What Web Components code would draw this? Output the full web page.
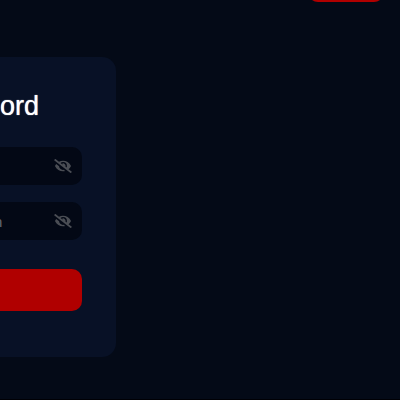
<!DOCTYPE html>
<html lang="en">
<head>
<meta charset="utf-8">
<title>Password</title>
<style>
html, body { margin: 0; height: 100%; background: #040a17; }
body { font-family: "Liberation Sans", Arial, sans-serif; color: #fff; overflow: hidden; }
</style>
</head>
<body>
<auth-page>
  <nav-action slot="nav"></nav-action>
  <password-card heading="ord">
    <password-field label="Password"></password-field>
    <password-field label="Confirm password" hint="n"></password-field>
    <submit-button slot="action"></submit-button>
  </password-card>
</auth-page>

<script>
const define = (name, html, setup) => {
  const template = document.createElement('template');
  template.innerHTML = html;
  customElements.define(name, class extends HTMLElement {
    constructor() {
      super();
      this.attachShadow({ mode: 'open' }).append(template.content.cloneNode(true));
    }
    connectedCallback() { if (setup) setup(this, this.shadowRoot); }
  });
};

define('auth-page', `
<style>
:host { display: flex; flex-direction: column; box-sizing: border-box; min-height: 100vh; border-bottom: 1px solid #000005; }
header { display: flex; justify-content: flex-end; padding: 0 16px; height: 57px; box-sizing: border-box; }
main { display: flex; align-items: flex-start; }
</style>
<header><slot name="nav"></slot></header>
<main><slot></slot></main>`);

define('nav-action', `
<style>
:host { display: block; margin-top: -34px; }
button { display: block; width: 76px; height: 36px; border: 0; border-radius: 10px; background: #b00000; }
</style>
<button type="button" aria-label="Sign in"></button>`);

define('password-card', `
<style>
:host { display: block; width: 30%; min-width: 122px; box-sizing: border-box; margin-left: -6px; padding: 34px 34px 46px 0; border-radius: 0 14px 14px 0; background: #081126; }
h1 { margin: 0 0 26px; padding-left: 6px; font-size: 27px; line-height: 30px; font-weight: 400; text-shadow: 0 0 1px #fff; }
form { display: flex; flex-direction: column; gap: 17px; }
.action { margin-top: 12px; }
</style>
<h1></h1>
<form><slot></slot><div class="action"><slot name="action"></slot></div></form>`,
(host, root) => { root.querySelector('h1').textContent = host.getAttribute('heading'); });

define('password-field', `
<style>
:host { display: block; }
div { display: flex; align-items: center; height: 38px; padding-right: 10px; border-radius: 0 10px 10px 0; background: #030815; }
input { flex: 1; min-width: 0; height: 100%; box-sizing: border-box; padding: 0; border: 0; outline: 0; background: none; color: #fff; font: 15px "Liberation Sans", Arial, sans-serif; }
input::placeholder { color: #646873; opacity: 1; }
button { display: block; padding: 0; border: 0; background: none; color: #4a4d54; }
svg { display: block; width: 18px; height: 14px; }
</style>
<div>
  <input type="password">
  <button type="button" aria-label="Show password">
    <svg viewBox="0 0 640 512" fill="currentColor" aria-hidden="true">
      <path d="M320 400c-75.850 0-137.250-58.710-142.900-133.110L72.200 185.820c-13.790 17.300-26.480 35.590-36.720 55.590a32.350 32.350 0 0 0 0 29.190C89.710 376.410 197.070 448 320 448c26.910 0 52.870-4 77.890-10.460L346 397.390a144.130 144.130 0 0 1-26 2.610zm313.820 58.100l-110.550-85.440a331.250 331.250 0 0 0 81.250-102.070 32.350 32.350 0 0 0 0-29.190C550.290 135.590 442.930 64 320 64a308.150 308.150 0 0 0-147.320 37.700L45.460 3.370A16 16 0 0 0 23 6.180L3.370 31.450A16 16 0 0 0 6.180 53.900l588.360 454.730a16 16 0 0 0 22.460-2.810l19.640-25.270a16 16 0 0 0-2.820-22.450zM450.190 314.820l-39.340-30.410A94.750 94.750 0 0 0 416 256a94.760 94.760 0 0 0-121.310-92.210A47.650 47.650 0 0 1 304 192a46.640 46.640 0 0 1-1.540 10l-73.690-56.950A142.310 142.310 0 0 1 320 112a143.920 143.920 0 0 1 144 144c0 21.630-5.290 41.790-13.810 58.820z"/>
    </svg>
  </button>
</div>`,
(host, root) => {
  const input = root.querySelector('input');
  input.setAttribute('aria-label', host.getAttribute('label'));
  input.placeholder = host.getAttribute('hint') || '';
});

define('submit-button', `
<style>
:host { display: block; }
button { display: block; width: 100%; height: 42px; border: 0; border-radius: 0 10px 10px 0; background: #b00000; }
</style>
<button type="submit" aria-label="Submit"></button>`);
</script>
</body>
</html>
